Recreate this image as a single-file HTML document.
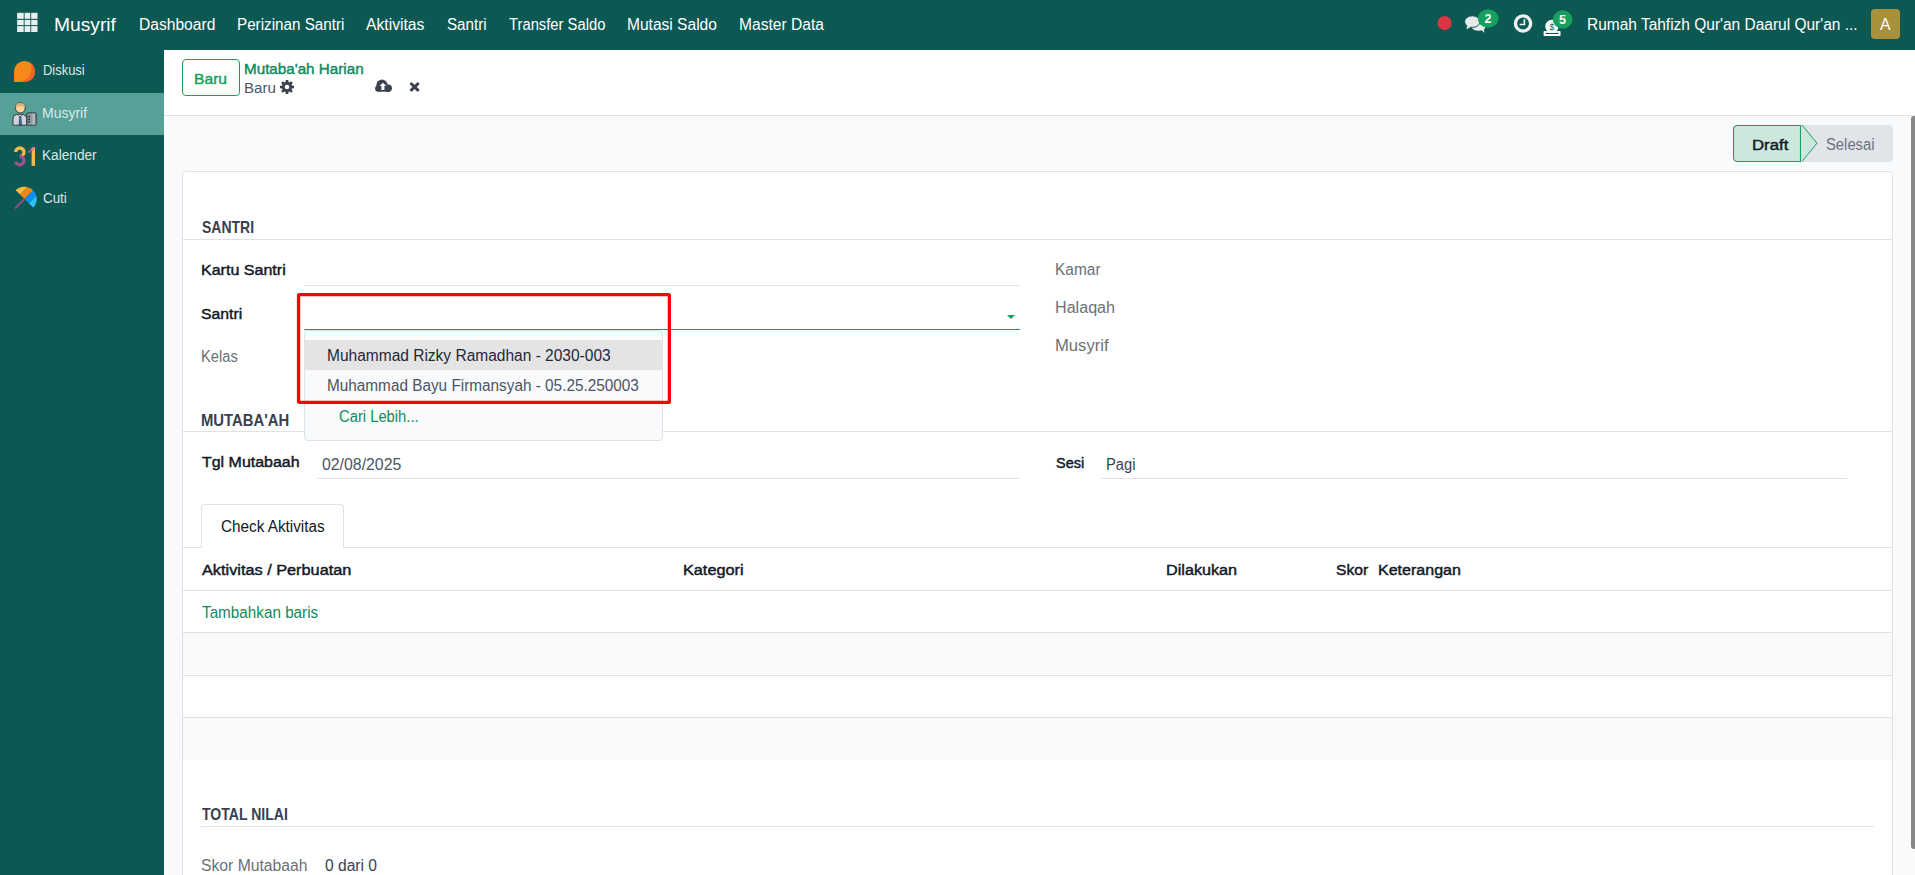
<!DOCTYPE html>
<html><head><meta charset="utf-8">
<style>
html,body{margin:0;padding:0;}
body{width:1915px;height:875px;overflow:hidden;position:relative;background:#f9fafb;font-family:"Liberation Sans",sans-serif;color:#374151;}
.a{position:absolute;}
.t{position:absolute;white-space:nowrap;line-height:1;transform-origin:0 0;}
.b{font-weight:700;}
.nw{color:#fff;}
.sw{color:#dfe6e5;}
.grn{color:#17a05d;}
.dk{color:#4b5563;}
.lbl{font-weight:400;color:#111827;-webkit-text-stroke:0.45px #111827;}
.glbl{color:#6c7075;}
.hl{position:absolute;height:1px;background:#dee2e6;}
.lnk{color:#118a5f;}

.sb{-webkit-text-stroke:0.45px currentColor;}

</style></head><body>
<div class="a" style="left:0;top:0;width:1915px;height:50px;background:#0c5853;"></div>
<div class="a" style="left:0;top:50px;width:164px;height:825px;background:#0c5853;"></div>
<div class="a" style="left:0;top:93px;width:164px;height:42px;background:#56a197;"></div>
<div class="a" style="left:164px;top:50px;width:1751px;height:65px;background:#fff;border-bottom:1px solid #dee2e6;"></div>
<!-- sheet -->
<div class="a" style="left:182px;top:171px;width:1709px;height:720px;background:#fff;border:1px solid #dee2e6;border-radius:4px;"></div>
<!-- scrollbar -->
<div class="a" style="left:1911px;top:116px;width:4px;height:733px;background:#878787;border-radius:3px 0 0 3px;"></div>
<!-- Baru button -->
<div class="a" style="left:182px;top:59px;width:56px;height:35px;border:1px solid #17a05d;border-radius:4px;"></div>
<!-- statusbar -->
<div class="a" style="left:1733px;top:125px;width:160px;height:37px;background:#e1e4e8;border-radius:4px;"></div>
<svg class="a" style="left:1733px;top:125px" width="90" height="37"><path d="M4.5 0.5 H67.5 V36.5 H4.5 A4 4 0 0 1 0.5 32.5 V4.5 A4 4 0 0 1 4.5 0.5 Z" fill="#cce7db" stroke="#17a05d" stroke-width="1.1"/><path d="M69 0 L84 18.2 L69 36.5 Z" fill="#cce7db"/><path d="M69 0 L84 18.2 L69 36.5" fill="none" stroke="#17a05d" stroke-width="1"/></svg>
<!-- section lines -->
<div class="hl" style="left:183px;top:239px;width:1709px;"></div>
<div class="hl" style="left:304px;top:285px;width:716px;"></div>
<div class="a" style="left:304px;top:329px;width:716px;height:1px;background:#17a05d;"></div>
<div class="hl" style="left:183px;top:431px;width:1709px;"></div>
<div class="hl" style="left:317px;top:478px;width:703px;"></div>
<div class="hl" style="left:1101px;top:478px;width:746px;"></div>
<!-- tab -->
<div class="hl" style="left:183px;top:547px;width:1709px;"></div>
<div class="a" style="left:201px;top:504px;width:141px;height:43px;background:#fff;border:1px solid #dee2e6;border-bottom:none;border-radius:4px 4px 0 0;"></div>
<div class="hl" style="left:183px;top:590px;width:1709px;"></div>
<div class="hl" style="left:183px;top:632px;width:1709px;"></div>
<div class="a" style="left:183px;top:633px;width:1709px;height:42px;background:#fafafa;"></div>
<div class="hl" style="left:183px;top:675px;width:1709px;"></div>
<div class="hl" style="left:183px;top:717px;width:1709px;"></div>
<div class="a" style="left:183px;top:718px;width:1709px;height:42px;background:#fafafa;"></div>
<div class="hl" style="left:201px;top:826px;width:1673px;"></div>
<!-- caret -->
<svg class="a" style="left:1006px;top:314px" width="10" height="6"><path d="M1 1 H9 L5 5 Z" fill="#17a05d"/></svg>
<!-- grid icon -->
<svg class="a" style="left:0;top:0" width="50" height="50"><g fill="#e8efee">
<rect x="17.1" y="12.8" width="6.6" height="6"/><rect x="24.6" y="12.8" width="5.7" height="6"/><rect x="31.2" y="12.8" width="6.3" height="6"/>
<rect x="17.1" y="19.9" width="6.6" height="5.2"/><rect x="24.6" y="19.9" width="5.7" height="5.2"/><rect x="31.2" y="19.9" width="6.3" height="5.2"/>
<rect x="17.1" y="26.1" width="6.6" height="5.9"/><rect x="24.6" y="26.1" width="5.7" height="5.9"/><rect x="31.2" y="26.1" width="6.3" height="5.9"/>
</g></svg>
<!-- navbar right icons -->
<svg class="a" style="left:1420px;top:0" width="160" height="50">
<circle cx="24.6" cy="23.1" r="7.1" fill="#dc3545"/>
<!-- chat bubbles -->
<ellipse cx="58.6" cy="27.4" rx="6.6" ry="3.4" fill="#e6eceb"/>
<path d="M59.5 28.5 L64.6 32.7 L63.2 27 Z" fill="#e6eceb"/>
<path d="M47.3 24.5 L46 30 L52.5 26.5 Z" fill="#e6eceb" stroke="#0c5853" stroke-width="1"/>
<ellipse cx="52.3" cy="21.6" rx="7.7" ry="5.8" fill="#e6eceb" stroke="#0c5853" stroke-width="1"/>
<path d="M47.3 25 L46.6 29 L51.5 26.5 Z" fill="#e6eceb"/>
<ellipse cx="68.2" cy="18.55" rx="10.4" ry="9.2" fill="#17a05d"/>
<!-- clock -->
<circle cx="103.05" cy="23.5" r="7.6" fill="none" stroke="#eef2f2" stroke-width="3.4"/>
<path d="M104.4 19.2 V24.5 H99.6" fill="none" stroke="#eef2f2" stroke-width="1.7"/>
<!-- money -->
<rect x="123.6" y="31" width="16.9" height="5.1" rx="0.8" fill="#fff"/><rect x="125.6" y="32.9" width="12.9" height="1.1" fill="#0c5853"/>
<circle cx="131.9" cy="26.4" r="6.65" fill="#fff"/><text x="131.9" y="29.7" font-size="8.5" font-family="Liberation Sans" fill="#0c5853" text-anchor="middle">$</text>
<ellipse cx="142.6" cy="19.5" rx="9.8" ry="9.3" fill="#17a05d"/>
</svg>
<div class="t" style="left:1478px;top:12.5px;font-size:12.5px;color:#fff;width:20px;text-align:center;font-weight:700">2</div>
<div class="t" style="left:1552.5px;top:13.5px;font-size:12.5px;color:#fff;width:20px;text-align:center;font-weight:700">5</div>

<!-- avatar -->
<div class="a" style="left:1871px;top:9px;width:29px;height:30px;background:#a8913a;border-radius:4px;"></div>
<!-- sidebar icons -->
<svg class="a" style="left:0;top:50px" width="50" height="170">
<defs><clipPath id="dclip"><path d="M14 32 V21.5 A10.5 10.5 0 0 1 35 21.5 A10.5 10.5 0 0 1 24.5 32 Z"/></clipPath></defs>
<path d="M14 32 V21.5 A10.5 10.5 0 0 1 35 21.5 A10.5 10.5 0 0 1 24.5 32 Z" fill="#f68a18"/>
<g clip-path="url(#dclip)"><path d="M31 12 C33 24 28 31 17 32.5 L40 40 L40 10 Z" fill="#f26326"/></g>
<!-- musyrif person -->
<g>
<rect x="26.9" y="62.9" width="9.3" height="12.3" rx="0.9" fill="#8f9ba6" stroke="#2b2f33" stroke-width="0.9"/>
<rect x="32.5" y="63.5" width="2.2" height="11.2" fill="#b5bec6"/>
<path d="M13 75.2 V68.6 Q13 64.7 16.8 64.4 H23 Q26.6 64.7 26.6 68.6 V75.2 Z" fill="#d1d4dc" stroke="#2b2f33" stroke-width="0.9"/>
<path d="M17.6 64.5 L20 66.8 L22.8 64.5 Z" fill="#f4f5f7" stroke="#2b2f33" stroke-width="0.6"/>
<path d="M19.7 66.3 L19 75 H21.6 L20.9 66.3 Z" fill="#3d68a8" stroke="#1f2a3a" stroke-width="0.5"/>
<ellipse cx="20.35" cy="57.9" rx="4.9" ry="5.1" fill="#fcd39b" stroke="#2b2f33" stroke-width="0.9"/>
<path d="M15.6 58.3 Q15.2 52.9 20.35 52.9 Q25.5 52.9 25.1 58.3 Q23.8 55.8 20.6 56.3 Q17.2 55.6 15.6 58.3 Z" fill="#dfae7e"/>
<g fill="#2e3236"><circle cx="29.1" cy="66.6" r="0.95"/><circle cx="29.1" cy="69.2" r="0.95"/><circle cx="29.1" cy="71.8" r="0.95"/></g>
</g>
<!-- 31 -->
<g transform="translate(0,-50)">
<path d="M15.6 152 A4.2 4.2 0 1 1 20 156.4" fill="none" stroke="#fbb945" stroke-width="3.3"/>
<path d="M19.5 156.4 A4.3 4.1 0 1 1 15.6 161.6" fill="none" stroke="#a2528e" stroke-width="3.3"/>
<path d="M33.3 148 V165.9" stroke="#fbb945" stroke-width="3.4"/>
<path d="M28.3 152.5 L33.5 148.2" stroke="#a2528e" stroke-width="2.4"/>
<path d="M31.5 149.7 L34.8 147.5" stroke="#f0858a" stroke-width="2.4"/>
</g>
<!-- umbrella -->
<g transform="translate(24.3,149.1) rotate(45)">
<defs><clipPath id="uclip"><path d="M-12.4 0 A12.4 12.4 0 0 1 12.4 0 Z"/></clipPath></defs>
<rect x="-0.9" y="0" width="1.8" height="13" fill="#a2528e"/>
<g clip-path="url(#uclip)">
<rect x="-13" y="-13" width="6.7" height="13" fill="#fbb945"/>
<rect x="-6.3" y="-13" width="6.3" height="13" fill="#f78613"/>
<rect x="0" y="-13" width="6.3" height="13" fill="#0d8ef3"/>
<rect x="6.3" y="-13" width="7" height="13" fill="#32bff5"/>
</g></g>
</svg>
<!-- control panel icons -->
<svg class="a" style="left:270px;top:70px" width="160" height="30">
<g transform="translate(17,17)">
<g fill="#3b424d">
<circle r="5"/>
<path d="M-1.3 -7 H1.3 L1.6 -4 H-1.6 Z" transform="rotate(0)"/><path d="M-1.3 -7 H1.3 L1.6 -4 H-1.6 Z" transform="rotate(45)"/>
<path d="M-1.3 -7 H1.3 L1.6 -4 H-1.6 Z" transform="rotate(90)"/><path d="M-1.3 -7 H1.3 L1.6 -4 H-1.6 Z" transform="rotate(135)"/>
<path d="M-1.3 -7 H1.3 L1.6 -4 H-1.6 Z" transform="rotate(180)"/><path d="M-1.3 -7 H1.3 L1.6 -4 H-1.6 Z" transform="rotate(225)"/>
<path d="M-1.3 -7 H1.3 L1.6 -4 H-1.6 Z" transform="rotate(270)"/><path d="M-1.3 -7 H1.3 L1.6 -4 H-1.6 Z" transform="rotate(315)"/>
</g>
<circle r="2.3" fill="#fff"/>
</g>
<g fill="#3b424d">
<circle cx="112" cy="15.2" r="5.6"/>
<circle cx="118.2" cy="18.3" r="3.7"/>
<circle cx="108.3" cy="18.6" r="3.2"/>
<rect x="108.3" y="15" width="10" height="6.7"/>
</g>
<path d="M112.9 12.7 L116.3 15.8 H114.4 V20 H111.4 V15.8 H109.5 Z" fill="#fff"/>
<path d="M140.5 13 L148.7 20.8 M148.7 13 L140.5 20.8" stroke="#3b424d" stroke-width="3"/>
</svg>

<div class="t nw" style="left:54.03px;top:16.00px;font-size:18px;transform:scaleX(1.0673);">Musyrif</div>
<div class="t nw" style="left:139.02px;top:17.00px;font-size:16px;transform:scaleX(0.9755);">Dashboard</div>
<div class="t nw" style="left:236.65px;top:17.00px;font-size:16px;transform:scaleX(0.9507);">Perizinan Santri</div>
<div class="t nw" style="left:365.60px;top:17.00px;font-size:16px;transform:scaleX(0.9804);">Aktivitas</div>
<div class="t nw" style="left:446.50px;top:17.00px;font-size:16px;transform:scaleX(0.9481);">Santri</div>
<div class="t nw" style="left:508.50px;top:17.00px;font-size:16px;transform:scaleX(0.9239);">Transfer Saldo</div>
<div class="t nw" style="left:627.03px;top:17.00px;font-size:16px;transform:scaleX(0.9717);">Mutasi Saldo</div>
<div class="t nw" style="left:738.52px;top:17.00px;font-size:16px;transform:scaleX(0.9752);">Master Data</div>
<div class="t nw" style="left:1586.53px;top:17.00px;font-size:16px;transform:scaleX(0.9673);">Rumah Tahfizh Qur'an Daarul Qur'an ...</div>
<div class="t nw" style="left:1879.90px;top:16.00px;font-size:17px;transform:scaleX(0.9250);">A</div>
<div class="t sw" style="left:42.67px;top:62.00px;font-size:15.5px;transform:scaleX(0.8349);">Diskusi</div>
<div class="t sw" style="left:42.30px;top:105.00px;font-size:15.5px;transform:scaleX(0.9025);">Musyrif</div>
<div class="t sw" style="left:42.32px;top:147.00px;font-size:15.5px;transform:scaleX(0.8804);">Kalender</div>
<div class="t sw" style="left:43.20px;top:190.00px;font-size:15.5px;transform:scaleX(0.8628);">Cuti</div>
<div class="t grn sb" style="left:194.39px;top:71.00px;font-size:15.5px;transform:scaleX(1.0090);">Baru</div>
<div class="t lnk sb" style="left:243.72px;top:61.00px;font-size:15.5px;transform:scaleX(0.9813);">Mutaba'ah Harian</div>
<div class="t dk" style="left:243.73px;top:80.00px;font-size:15.5px;transform:scaleX(0.9736);">Baru</div>
<div class="t sb" style="left:1751.52px;top:137.00px;font-size:15.5px;transform:scaleX(1.0817);color:#111827">Draft</div>
<div class="t " style="left:1825.70px;top:137.00px;font-size:16px;transform:scaleX(0.9245);color:#6b7280">Selesai</div>
<div class="t b" style="left:201.80px;top:219.00px;font-size:16.3px;transform:scaleX(0.8589);color:#374151">SANTRI</div>
<div class="t lbl" style="left:201.17px;top:262.00px;font-size:15.5px;transform:scaleX(1.0348);">Kartu Santri</div>
<div class="t lbl" style="left:201.40px;top:306.00px;font-size:15.5px;transform:scaleX(1.0188);">Santri</div>
<div class="t glbl" style="left:201.48px;top:349.00px;font-size:16px;transform:scaleX(0.9174);">Kelas</div>
<div class="t glbl" style="left:1055.43px;top:262.00px;font-size:16px;transform:scaleX(0.9680);">Kamar</div>
<div class="t glbl" style="left:1055.39px;top:300.00px;font-size:16px;transform:scaleX(1.0069);">Halaqah</div>
<div class="t glbl" style="left:1055.36px;top:338.00px;font-size:16px;transform:scaleX(1.0389);">Musyrif</div>
<div class="t b" style="left:201.09px;top:412.00px;font-size:16.3px;transform:scaleX(0.9109);color:#374151">MUTABA'AH</div>
<div class="t lbl" style="left:201.80px;top:454.00px;font-size:15.5px;transform:scaleX(1.0291);">Tgl Mutabaah</div>
<div class="t " style="left:321.70px;top:457.00px;font-size:16px;transform:scaleX(0.9903);color:#4b5563">02/08/2025</div>
<div class="t lbl" style="left:1055.90px;top:455.00px;font-size:15.5px;transform:scaleX(0.9324);">Sesi</div>
<div class="t " style="left:1106.08px;top:457.00px;font-size:16px;transform:scaleX(0.9190);color:#374151">Pagi</div>
<div class="t " style="left:220.60px;top:519.00px;font-size:16px;transform:scaleX(0.9546);color:#111827">Check Aktivitas</div>
<div class="t lbl" style="left:201.80px;top:562.00px;font-size:15.5px;transform:scaleX(1.0506);">Aktivitas / Perbuatan</div>
<div class="t lbl" style="left:683.25px;top:562.00px;font-size:15.5px;transform:scaleX(1.0482);">Kategori</div>
<div class="t lbl" style="left:1165.76px;top:562.00px;font-size:15.5px;transform:scaleX(1.0445);">Dilakukan</div>
<div class="t lbl" style="left:1335.90px;top:562.00px;font-size:15.5px;transform:scaleX(1.0092);">Skor</div>
<div class="t lbl" style="left:1377.87px;top:562.00px;font-size:15.5px;transform:scaleX(1.0340);">Keterangan</div>
<div class="t lnk" style="left:201.80px;top:605.00px;font-size:16px;transform:scaleX(0.9537);">Tambahkan baris</div>
<div class="t b" style="left:201.90px;top:806.00px;font-size:16.3px;transform:scaleX(0.8624);color:#374151">TOTAL NILAI</div>
<div class="t glbl" style="left:201.40px;top:858.00px;font-size:16px;transform:scaleX(0.9813);">Skor Mutabaah</div>
<div class="t " style="left:325.10px;top:858.00px;font-size:16px;transform:scaleX(0.9744);color:#374151">0 dari 0</div>
<div class="a" style="left:304px;top:330px;width:357px;height:109px;background:#f9fafb;border:1px solid #dee2e6;border-radius:4px;"></div>
<div class="a" style="left:305px;top:340px;width:357px;height:30px;background:#e4e4e5;"></div>

<div class="t " style="left:327.33px;top:348.00px;font-size:16px;transform:scaleX(0.9695);color:#1f2937">Muhammad Rizky Ramadhan - 2030-003</div>
<div class="t " style="left:327.34px;top:378.00px;font-size:16px;transform:scaleX(0.9581);color:#4b5563">Muhammad Bayu Firmansyah - 05.25.250003</div>
<div class="t lnk" style="left:339.40px;top:409.00px;font-size:16px;transform:scaleX(0.9231);">Cari Lebih...</div>
<svg class="a" style="left:290px;top:286px" width="390" height="125"><rect x="8.55" y="8.55" width="370.8" height="107.8" rx="0.9" fill="none" stroke="#ff0000" stroke-width="3.3"/></svg>
</body></html>
